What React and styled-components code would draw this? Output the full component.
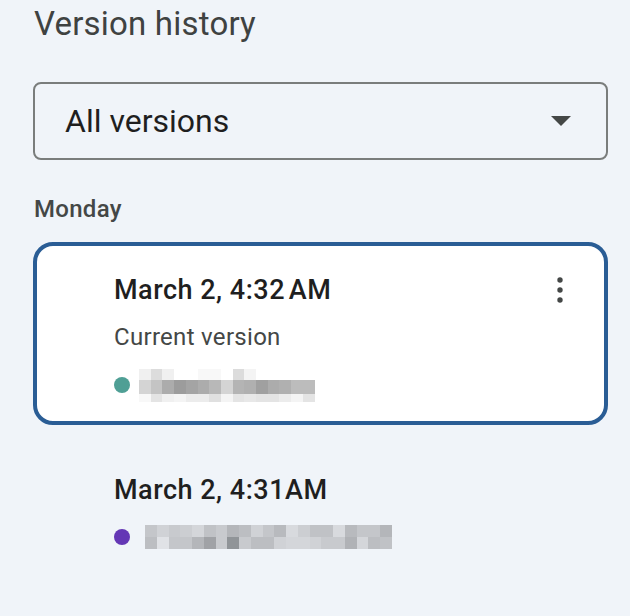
import React from 'react';
import styled, { createGlobalStyle } from 'styled-components';

const GlobalStyle = createGlobalStyle`
  html, body {
    margin: 0;
    padding: 0;
    background: #f0f4f9;
  }
  body {
    font-family: Roboto, "Noto Sans", "Liberation Sans", sans-serif;
  }
`;

const versions = [
  {
    id: 1,
    time: 'March 2, 4:32\u202FAM',
    note: 'Current version',
    selected: true,
    color: '#4f9f95',
    gap: 9,
    rowHeights: [11, 14, 8],
    cell: 11.7,
    blur: [
      ['f0f0f0', 'dcdcdc', 'f0f0f0', 'fff', 'fff', 'f8f8f8', 'f8f8f8', 'fff', 'dcdcdc', 'f4f4f4', 'fff', 'fff', 'fff', 'fff', 'fff'],
      ['d4d4d4', 'c4c4c4', 'acacac', '9c9c9c', 'a4a4a4', 'acacac', 'b8b8b8', 'd4d4d4', 'b4b4b4', 'b0b0b0', 'a0a0a0', 'acacac', 'b0b0b0', 'bcbcbc', 'bcbcbc'],
      ['f8f8f8', 'e4e4e4', 'f0f0f0', 'f4f4f4', 'ececec', 'ececec', 'e0e0e0', 'f4f4f4', 'e4e4e4', 'e8e8e8', 'e4e4e4', 'e4e4e4', 'ececec', 'f4f4f4', 'e4e4e4'],
    ],
  },
  {
    id: 2,
    time: 'March 2, 4:31AM',
    selected: false,
    color: '#6437b5',
    gap: 15,
    rowHeights: [12, 12],
    cell: 11.76,
    blur: [
      ['c4c6ca', 'd0d2d6', 'c8cace', 'ccced2', 'd4d6da', 'c0c2c6', 'c8cace', 'b4b6ba', 'bcbec2', 'd0d2d6', 'c4c6ca', 'b8babe', 'd8dade', 'ccced2', 'c0c2c6', 'c0c2c6', 'd8dade', 'b8babe', 'c4c6ca', 'c4c6ca', 'b4b6ba'],
      ['bcbec2', 'e0e2e6', 'c4c6ca', 'c4c6ca', 'b4b6ba', 'a0a2a6', 'c8cace', '909498', 'c8cace', 'bcbec2', 'bcbec2', 'd0d2d6', 'd4d6da', 'd4d6da', 'd0d2d6', 'c8cace', 'c8cace', 'b0b2b6', 'd4d6da', 'bcbec2', 'c0c2c6'],
    ],
  },
];

const Panel = styled.div`
  width: 630px;
  height: 616px;
  box-sizing: border-box;
  padding: 4px 22px 0 33px;
  background: #f0f4f9;
  overflow: hidden;
`;

const Title = styled.h1`
  margin: 0 0 0 1px;
  font-size: 33px;
  line-height: 40px;
  font-weight: 400;
  letter-spacing: 0.2px;
  color: #3f4241;
`;

const Select = styled.div`
  margin-top: 38px;
  height: 78px;
  box-sizing: border-box;
  border: 2px solid #7a7d7c;
  border-radius: 8px;
  padding: 0 35px 0 30px;
  display: flex;
  align-items: center;
  justify-content: space-between;
  font-size: 32px;
  color: #1f1f1f;
`;

const DayLabel = styled.div`
  margin: 35px 0 19px 1px;
  font-size: 24px;
  line-height: 28px;
  font-weight: 500;
  letter-spacing: 0.3px;
  color: #444746;
`;

const List = styled.div`
  display: flex;
  flex-direction: column;
  gap: 17px;
`;

const Item = styled.div`
  border: 4px solid ${p => (p.$selected ? '#2a5d95' : 'transparent')};
  border-radius: 20px;
  background: ${p => (p.$selected ? '#ffffff' : 'transparent')};
  padding: 28px 32px 19px 77px;
`;

const HeadRow = styled.div`
  display: flex;
  align-items: center;
  justify-content: space-between;
  height: 32px;
`;

const Time = styled.div`
  font-size: 27px;
  line-height: 32px;
  font-weight: 500;
  letter-spacing: 0.5px;
  color: #1f1f1f;
`;

const Note = styled.div`
  margin-top: 17px;
  font-size: 24px;
  line-height: 28px;
  letter-spacing: 0.3px;
  color: #444746;
`;

const AuthorRow = styled.div`
  margin-top: ${p => (p.$tight ? 14 : 17)}px;
  height: 34px;
  display: flex;
  align-items: center;
  gap: ${p => p.$gap}px;
`;

const Dot = styled.span`
  width: 16px;
  height: 16px;
  border-radius: 50%;
  background: ${p => p.$color};
  flex-shrink: 0;
`;

const MoreButton = styled.button`
  border: 0;
  padding: 0;
  background: none;
  display: flex;
  color: #444746;
`;

const Arrow = () => (
  <svg width="20" height="10" viewBox="0 0 20 10">
    <path d="M0 0h20L10 10z" fill="#444746" />
  </svg>
);

const Kebab = () => (
  <svg width="24" height="30" viewBox="0 0 24 30">
    <circle cx="12" cy="5" r="2.7" fill="currentColor" />
    <circle cx="12" cy="15" r="2.7" fill="currentColor" />
    <circle cx="12" cy="25" r="2.7" fill="currentColor" />
  </svg>
);

// pixelated name, drawn as blocks
const Redacted = ({ rows, cell, rowHeights }) => {
  const width = rows[0].length * cell;
  const height = rowHeights.reduce((a, b) => a + b, 0);
  let y = 0;
  return (
    <svg width={width} height={height} viewBox={`0 0 ${width} ${height}`} shapeRendering="crispEdges">
      {rows.map((row, r) => {
        const top = y;
        y += rowHeights[r];
        return row.map((c, i) => (
          <rect key={`${r}-${i}`} x={i * cell} y={top} width={cell + 0.5} height={rowHeights[r]} fill={`#${c}`} />
        ));
      })}
    </svg>
  );
};

const App = () => (
  <>
    <GlobalStyle />
    <Panel>
      <Title>Version history</Title>
      <Select>
        <span>All versions</span>
        <Arrow />
      </Select>
      <DayLabel>Monday</DayLabel>
      <List>
        {versions.map(v => (
          <Item key={v.id} $selected={v.selected}>
            <HeadRow>
              <Time>{v.time}</Time>
              {v.selected && (
                <MoreButton aria-label="More actions">
                  <Kebab />
                </MoreButton>
              )}
            </HeadRow>
            {v.note && <Note>{v.note}</Note>}
            <AuthorRow $gap={v.gap} $tight={!v.note}>
              <Dot $color={v.color} />
              <Redacted rows={v.blur} cell={v.cell} rowHeights={v.rowHeights} />
            </AuthorRow>
          </Item>
        ))}
      </List>
    </Panel>
  </>
);

export default App;
